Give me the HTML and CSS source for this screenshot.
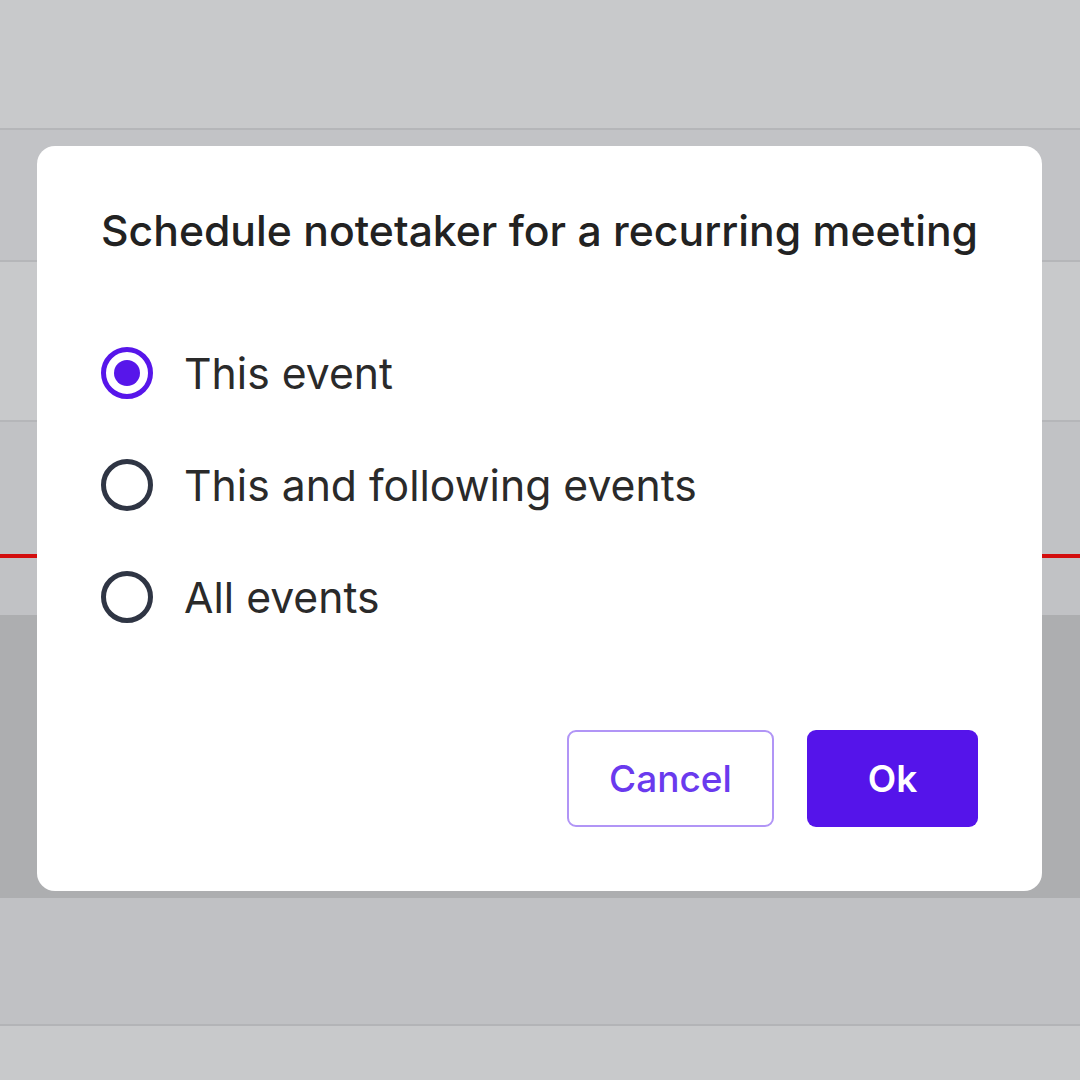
FILE: index.html
```html
<!DOCTYPE html>
<html>
<head>
<meta charset="utf-8">
<link rel="stylesheet" href="styles.css">
</head>
<body>
<div class="page">
  <div class="band band-a"></div>
  <div class="band band-b"></div>
  <div class="band band-c"></div>
  <div class="band band-d"><div class="now-line"></div></div>
  <div class="band band-e"></div>
  <div class="band band-f"></div>
  <div class="band band-g"></div>
</div>
<div class="modal">
  <h1 class="title">Schedule notetaker for a recurring meeting</h1>
  <div class="options">
    <label class="option"><span class="radio checked"></span><span class="label">This event</span></label>
    <label class="option"><span class="radio"></span><span class="label">This and following events</span></label>
    <label class="option"><span class="radio"></span><span class="label">All events</span></label>
  </div>
  <div class="actions">
    <button class="btn btn-cancel">Cancel</button>
    <button class="btn btn-ok">Ok</button>
  </div>
</div>
</body>
</html>
```
FILE: styles.css
```css
* { box-sizing: border-box; }
html, body { margin: 0; padding: 0; }
body {
  width: 1080px;
  height: 1080px;
  overflow: hidden;
  position: relative;
  background: #c8c9cb;
  font-family: Inter, "Noto Sans", sans-serif;
}
.page { display: flex; flex-direction: column; }
.band { flex: none; }
.band-a { height: 130px; background: #c8c9cb; border-bottom: 2px solid #b5b6b9; }
.band-b { height: 132px; background: #c2c3c6; border-bottom: 2px solid #b5b6b9; }
.band-c { height: 160px; background: #c8c9cb; border-bottom: 2px solid #b5b6b9; }
.band-d { height: 193px; background: #c1c2c5; padding-top: 132px; }
.now-line { height: 4px; background: #d30e0e; }
.band-e { height: 283px; background: #adaeb0; }
.band-f { height: 128px; background: #c0c1c4; border-bottom: 2px solid #b3b4b7; }
.band-g { height: 50px; background: #c8c9cb; }

.modal {
  position: absolute;
  left: 37px;
  top: 146px;
  width: 1005px;
  height: 745px;
  background: #ffffff;
  border-radius: 18px;
  padding: 59px 64px 0 64px;
  display: flex;
  flex-direction: column;
}
.title {
  margin: 0;
  font-size: 42.7px;
  line-height: 52px;
  font-weight: 500;
  color: #222222;
  white-space: nowrap;
}
.options {
  margin-top: 90px;
  display: flex;
  flex-direction: column;
  gap: 60px;
}
.option {
  display: flex;
  align-items: center;
  gap: 31px;
  height: 52px;
}
.radio {
  flex: none;
  width: 52px;
  height: 52px;
  border-radius: 50%;
  border: 5px solid #2f3544;
  display: flex;
  align-items: center;
  justify-content: center;
}
.radio.checked { border-color: #5716ea; }
.radio.checked::after {
  content: "";
  width: 26px;
  height: 26px;
  border-radius: 50%;
  background: #5716ea;
}
.label {
  font-size: 42.7px;
  color: #2a2a2a;
  font-weight: 400;
}
.actions {
  margin-top: 107px;
  display: flex;
  justify-content: flex-end;
  gap: 33px;
}
.btn {
  font-family: Inter, "Noto Sans", sans-serif;
  height: 97px;
  border-radius: 9px;
  font-size: 37px;
  font-weight: 500;
  cursor: pointer;
}
.btn-cancel {
  width: 207px;
  background: #ffffff;
  border: 2px solid #b195f6;
  color: #6a3aee;
}
.btn-ok {
  width: 171px;
  background: #5514ea;
  border: none;
  color: #ffffff;
  font-weight: 600;
}
```
